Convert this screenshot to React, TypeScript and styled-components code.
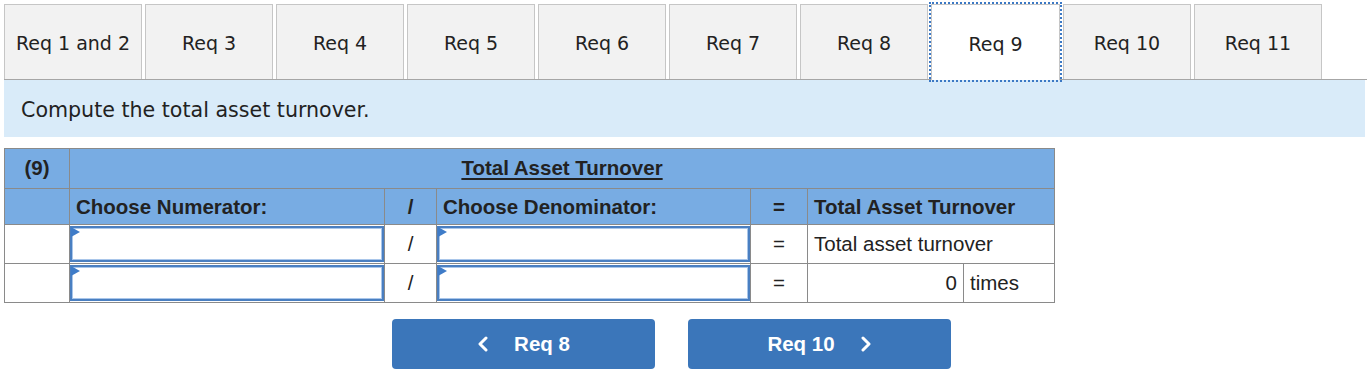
import React from 'react';
import styled, { createGlobalStyle } from 'styled-components';

const GlobalStyle = createGlobalStyle`
  html, body {
    margin: 0;
    padding: 0;
    background: #ffffff;
  }
  body {
    font-family: "Liberation Sans", Arial, sans-serif;
    color: #222222;
  }
`;

const Page = styled.div`
  padding: 4px 2px 0 4px;
  width: 1367px;
  box-sizing: border-box;
`;

const TabBar = styled.div`
  display: flex;
  gap: 3px;
  border-bottom: 1px solid #a6a6a6;
  margin-right: -2px;
`;

const Tab = styled.button<{ $active?: boolean; $wide?: boolean }>`
  width: ${p => (p.$wide ? '138px' : p.$active ? '129px' : '128px')};
  box-sizing: border-box;
  border: 1px solid #c6c6c6;
  border-bottom: none;
  background: ${p => (p.$active ? '#ffffff' : '#f2f2f2')};
  font-family: "DejaVu Sans", Verdana, sans-serif;
  font-size: 19px;
  color: #222222;
  padding: 2px 0 0;
  margin-bottom: ${p => (p.$active ? '-1px' : '0')};
  height: ${p => (p.$active ? '76px' : '75px')};
  outline: ${p => (p.$active ? '2px dotted #3b78c4' : 'none')};
  outline-offset: 0;
  cursor: pointer;
`;

const Instruction = styled.div`
  background: #d9ebf9;
  height: 57px;
  box-sizing: border-box;
  display: flex;
  align-items: center;
  padding: 3px 0 0 17px;
  font-family: "DejaVu Sans", Verdana, sans-serif;
  font-size: 20.6px;
  color: #222222;
`;

const Grid = styled.table`
  margin-top: 11px;
  border-collapse: collapse;
  table-layout: fixed;
  width: 1051px;
  font-size: 20.5px;
  color: #222222;
`;

const Cell = styled.td<{ $head?: boolean; $align?: string; $bold?: boolean }>`
  border: 1px solid #8a8a8a;
  background: ${p => (p.$head ? '#78ace3' : '#ffffff')};
  text-align: ${p => p.$align || 'left'};
  font-weight: ${p => (p.$bold ? 700 : 400)};
  padding: 0 6px;
  height: ${p => (p.$head ? '36px' : '37px')};
  box-sizing: border-box;
  white-space: nowrap;
`;

const TitleCell = styled(Cell)`
  height: 40px;
  vertical-align: top;
  padding-top: 7px;
`;

const Title = styled.span`
  text-decoration: underline;
  text-underline-offset: 3px;
`;

const InputCell = styled.td`
  border: 1px solid #8a8a8a;
  padding: 0;
  height: 38px;
  position: relative;
`;

const Field = styled.div`
  height: 36px;
  box-sizing: border-box;
  border: 2px solid #4a7fc1;
  box-shadow: inset 0 0 0 1px #a9c6ea;
  background: #ffffff;
`;

const Marker = styled.span`
  position: absolute;
  left: 1px;
  top: 2px;
  width: 0;
  height: 0;
  border-top: 5px solid transparent;
  border-bottom: 5px solid transparent;
  border-left: 9px solid #3f7cc8;
`;

const Nav = styled.div`
  display: flex;
  justify-content: center;
  gap: 33px;
  width: 1335px;
  margin-top: 16px;
`;

const NavButton = styled.button`
  width: 263px;
  height: 50px;
  border: none;
  border-radius: 4px;
  background: #3b76ba;
  color: #ffffff;
  font-family: "Liberation Sans", Arial, sans-serif;
  font-weight: 700;
  font-size: 20.5px;
  display: flex;
  align-items: center;
  justify-content: center;
  gap: 25px;
  cursor: pointer;
`;

const Chevron = ({ dir }: { dir: 'left' | 'right' }) => (
  <svg width="12" height="16" viewBox="0 0 12 16">
    <polyline
      points={dir === 'left' ? '9,2 3,8 9,14' : '3,2 9,8 3,14'}
      fill="none"
      stroke="#ffffff"
      strokeWidth="3"
      strokeLinecap="round"
      strokeLinejoin="round"
    />
  </svg>
);

const tabs = ['Req 1 and 2', 'Req 3', 'Req 4', 'Req 5', 'Req 6', 'Req 7', 'Req 8', 'Req 9', 'Req 10', 'Req 11'];

function ChoiceInput() {
  return (
    <InputCell>
      <Field />
      <Marker />
    </InputCell>
  );
}

export default function App() {
  return (
    <Page>
      <GlobalStyle />
      <TabBar>
        {tabs.map((t, i) => (
          <Tab key={t} $wide={i === 0} $active={t === 'Req 9'}>
            {t}
          </Tab>
        ))}
      </TabBar>
      <Instruction>Compute the total asset turnover.</Instruction>

      <Grid>
        <colgroup>
          <col style={{ width: 65 }} />
          <col style={{ width: 315 }} />
          <col style={{ width: 52 }} />
          <col style={{ width: 314 }} />
          <col style={{ width: 57 }} />
          <col style={{ width: 156 }} />
          <col style={{ width: 91 }} />
        </colgroup>
        <tbody>
          <tr>
            <TitleCell $head $bold $align="center">(9)</TitleCell>
            <TitleCell $head $bold $align="center" colSpan={6}>
              <Title>Total Asset Turnover</Title>
            </TitleCell>
          </tr>
          <tr>
            <Cell $head />
            <Cell $head $bold>Choose Numerator:</Cell>
            <Cell $head $bold $align="center">/</Cell>
            <Cell $head $bold>Choose Denominator:</Cell>
            <Cell $head $bold $align="center">=</Cell>
            <Cell $head $bold colSpan={2}>Total Asset Turnover</Cell>
          </tr>
          <tr>
            <Cell />
            <ChoiceInput />
            <Cell $align="center">/</Cell>
            <ChoiceInput />
            <Cell $align="center">=</Cell>
            <Cell colSpan={2}>Total asset turnover</Cell>
          </tr>
          <tr>
            <Cell />
            <ChoiceInput />
            <Cell $align="center">/</Cell>
            <ChoiceInput />
            <Cell $align="center">=</Cell>
            <Cell $align="right">0</Cell>
            <Cell>times</Cell>
          </tr>
        </tbody>
      </Grid>

      <Nav>
        <NavButton>
          <Chevron dir="left" />
          <span>Req 8</span>
        </NavButton>
        <NavButton>
          <span>Req 10</span>
          <Chevron dir="right" />
        </NavButton>
      </Nav>
    </Page>
  );
}
